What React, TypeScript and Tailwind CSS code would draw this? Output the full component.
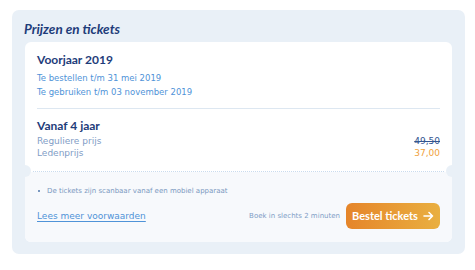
import React from 'react';

const body = { fontFamily: '"DejaVu Sans", Verdana, sans-serif' };
const head = { fontFamily: 'Lato, "Open Sans", sans-serif' };

const App: React.FC = () => {
  return (
    <div className="w-[475px] h-[270px] bg-white pt-[10px] pl-[12px] pr-[10px]">
      <div className="rounded-[7px] bg-[#e9f0f7] px-[13px] pt-[10px] pb-[12px]">
        {/* Title */}
        <h2
          className="italic font-bold text-[13.5px] leading-[18px] text-[#1e3c7a] mb-[4px] -ml-[1px]"
          style={head}
        >
          Prijzen en tickets
        </h2>

        {/* Ticket card */}
        <div className="relative rounded-[6px] bg-white overflow-hidden">
          <div className="px-[12px] pt-[11px] pb-[12px]">
            <div className="text-[12px] leading-[14px] font-bold text-[#1e3c7a]" style={head}>
              Voorjaar 2019
            </div>
            <div className="mt-[4px] text-[8.5px] leading-[14px] text-[#4f93d8]" style={body}>
              <div>Te bestellen t/m 31 mei 2019</div>
              <div>Te gebruiken t/m 03 november 2019</div>
            </div>

            <div className="mt-[9px] mb-[10px] h-px bg-[#dde7f1]" />

            <div className="text-[12px] leading-[14px] font-bold text-[#1e3c7a]" style={head}>
              Vanaf 4 jaar
            </div>
            <div className="mt-[2px] text-[9px] leading-[12px]" style={body}>
              <div className="flex justify-between">
                <span className="text-[#7f9dc6]">Reguliere prijs</span>
                <span className="text-[#34558f] line-through">49,50</span>
              </div>
              <div className="flex justify-between">
                <span className="text-[#7f9dc6]">Ledenprijs</span>
                <span className="text-[#f0a23c]">37,00</span>
              </div>
            </div>
          </div>

          {/* Perforation */}
          <div className="relative h-0 mx-[8px] border-t border-dotted border-[#c9dbee]" />
          <div className="absolute left-[-6px] top-[123px] w-[12px] h-[12px] rounded-full bg-[#e9f0f7]" />
          <div className="absolute right-[-6px] top-[123px] w-[12px] h-[12px] rounded-full bg-[#e9f0f7]" />

          <div className="bg-[#f7f9fc] px-[12px] pt-[13px] pb-[13px]">
            <div className="flex items-center gap-[6px] text-[7px] leading-[12px] text-[#7a98c0]" style={body}>
              <span className="w-[2px] h-[2px] bg-[#7a98c0] ml-[1px]" />
              <span className="ml-[1px]">De tickets zijn scanbaar vanaf een mobiel apparaat</span>
            </div>
            <div className="mt-[6px] flex items-center">
              <a
                href="#"
                className="text-[9px] leading-[12px] text-[#4f93d8] underline underline-offset-[2px]"
                style={body}
              >
                Lees meer voorwaarden
              </a>
              <span className="ml-auto text-[7px] text-[#7f9dc6]" style={body}>
                Boek in slechts 2 minuten
              </span>
              <button
                className="ml-[6px] w-[94px] h-[26px] rounded-[6px] bg-gradient-to-r from-[#e5852a] to-[#e9af40] text-white text-[11px] font-bold flex items-center justify-center gap-[5px]"
                style={head}
              >
                <span>Bestel tickets</span>
                <svg width="11" height="10" viewBox="0 0 11 10" fill="none" stroke="white" strokeWidth="1.6" strokeLinecap="round" strokeLinejoin="round">
                  <path d="M1 5h8.5M6 1.5L9.5 5 6 8.5" />
                </svg>
              </button>
            </div>
          </div>
        </div>
      </div>
    </div>
  );
};

export default App;
